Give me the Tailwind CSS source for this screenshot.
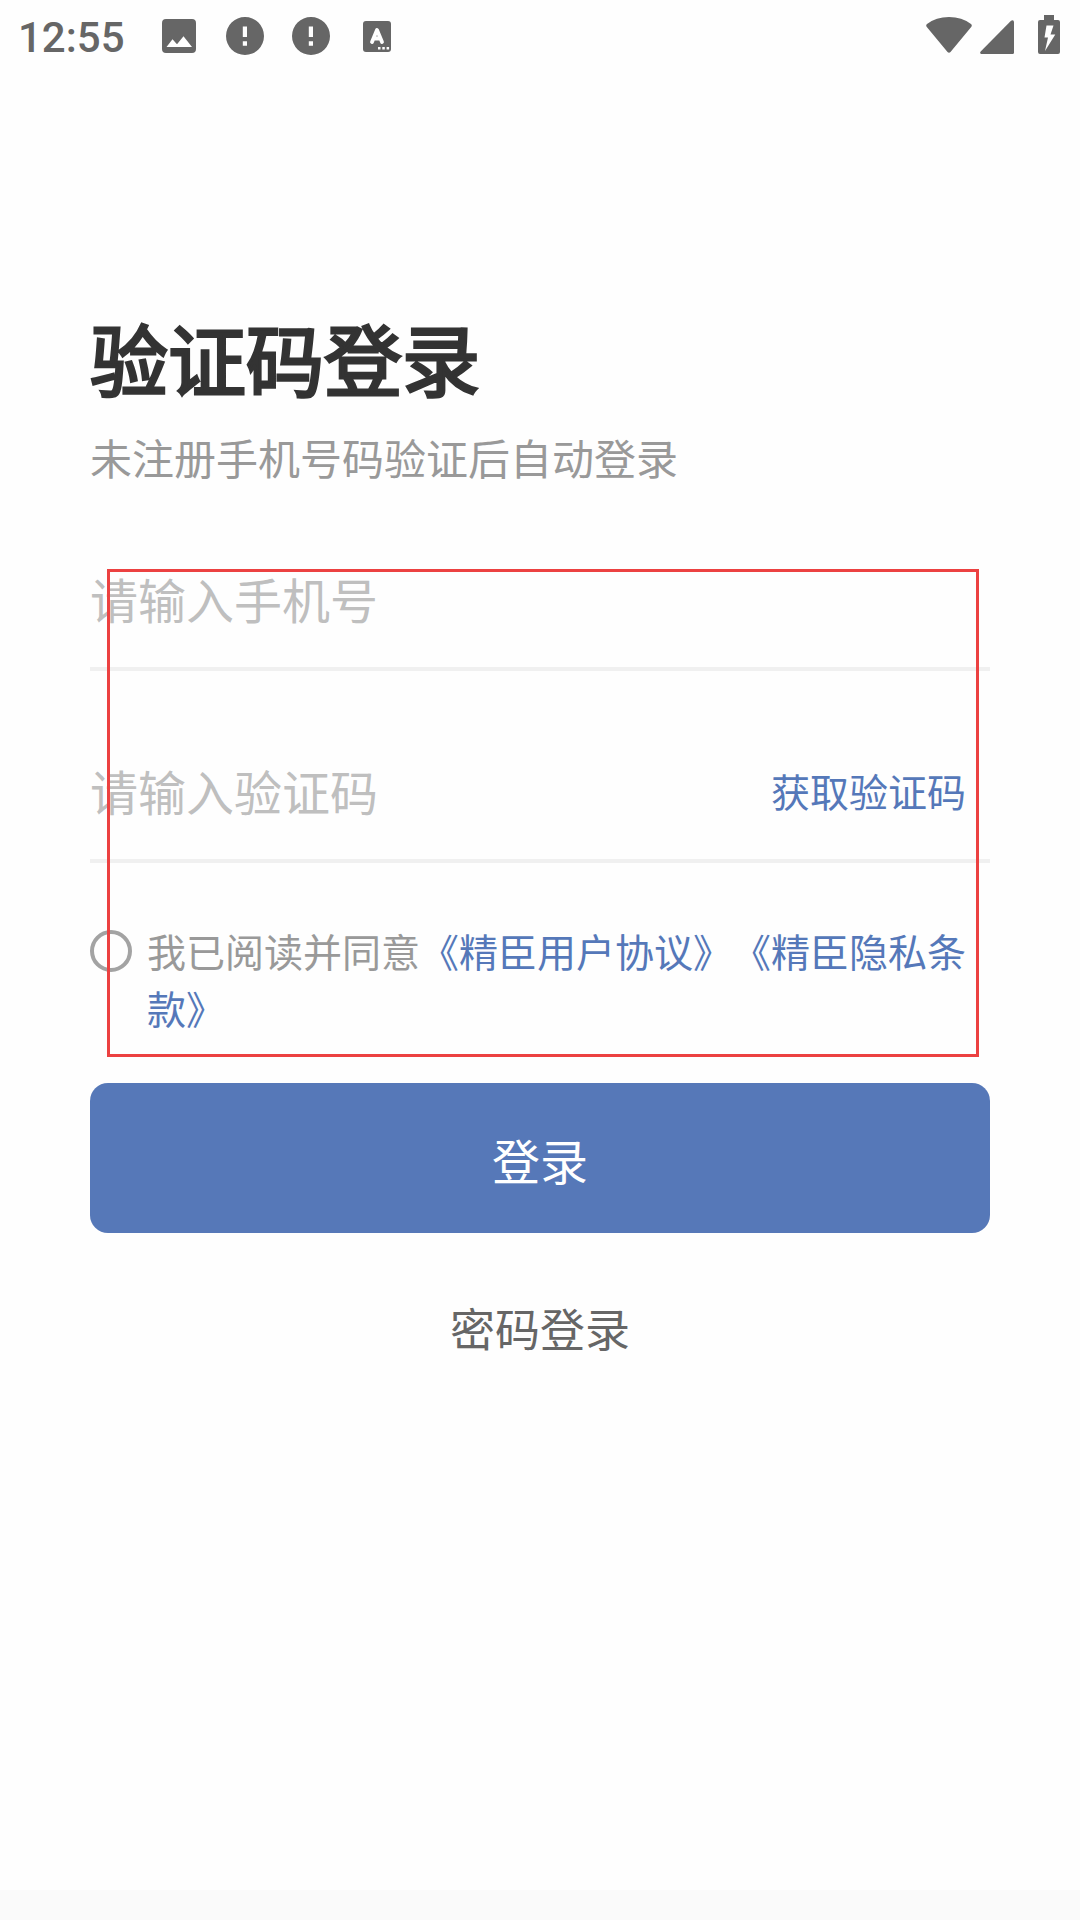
<!DOCTYPE html>
<html lang="zh-CN">
<head>
  <meta charset="UTF-8">
  <meta name="viewport" content="width=device-width, initial-scale=1.0">
  <title>验证码登录</title>
  <script src="https://cdn.jsdelivr.net/npm/@tailwindcss/browser@4"></script>
</head>
<body class="bg-[#fefefe] font-['Noto_Sans_CJK_SC',sans-serif]">
  <div class="relative flex flex-col w-[1080px] h-[1920px] overflow-hidden">
    <!-- Status bar -->
    <header class="flex items-center justify-between h-[72px] pl-[18px] pr-[20px] text-[#666]">
      <div class="flex items-center">
        <span class="w-[144px] h-[72px] pt-[2px] font-['Roboto',sans-serif] text-[42px] leading-[72px] font-medium">12:55</span>
        <svg class="w-[34px] h-[34px] mr-[30px]" viewBox="0 0 34 34" fill="currentColor">
          <path fill-rule="evenodd" d="M4 0h26a4 4 0 0 1 4 4v26a4 4 0 0 1-4 4H4a4 4 0 0 1-4-4V4a4 4 0 0 1 4-4zM4.500 28h25.500L21.500 17.200 15 25.200 10.500 20.200z"/>
        </svg>
        <svg class="w-[38px] h-[38px] mr-[28px]" viewBox="0 0 38 38" fill="currentColor">
          <path fill-rule="evenodd" d="M19 0a19 19 0 1 1 0 38 19 19 0 0 1 0-38zM16.800 9.500v10.500h4.200V9.500zM16.800 24.300v4.400h4.200v-4.400z"/>
        </svg>
        <svg class="w-[38px] h-[38px] mr-[33px]" viewBox="0 0 38 38" fill="currentColor">
          <path fill-rule="evenodd" d="M19 0a19 19 0 1 1 0 38 19 19 0 0 1 0-38zM16.800 9.500v10.500h4.200V9.500zM16.800 24.300v4.400h4.200v-4.400z"/>
        </svg>
        <svg class="w-[28px] h-[31px]" viewBox="0 0 28 31">
          <rect width="28" height="31" rx="3" fill="currentColor"/>
          <path d="M9 21l5-12 5 12M10.500 17.500h7" fill="none" stroke="#fefefe" stroke-width="3.800" stroke-linecap="round" stroke-linejoin="round"/>
          <path d="M15 26h2.500v2.500H15zM19.300 26h2.500v2.500h-2.500zM23.600 26h2.500v2.500h-2.500z" fill="#fefefe"/>
        </svg>
      </div>
      <div class="flex items-end h-[39px] mb-[3px]">
        <svg class="w-[46px] h-[36px] mr-[8px] mb-[1px]" viewBox="0 0 46 36" fill="currentColor">
          <path d="M1 7Q10 0 23 0T45 7Q46.500 8.500 45.200 10L24.500 35Q23 36.500 21.500 35L.800 10Q-.500 8.500 1 7z"/>
        </svg>
        <svg class="w-[34px] h-[34px] mr-[24px]" viewBox="0 0 34 34" fill="currentColor">
          <path d="M34 1.500V32.500Q34 34 32.500 34H1.200Q-.700 33.300.700 31.500L31 .800Q33-.700 34 1.500z"/>
        </svg>
        <svg class="w-[22px] h-[39px]" viewBox="0 0 22 39" fill="currentColor">
          <path fill-rule="evenodd" d="M6 0h10v5h4a2 2 0 0 1 2 2v30a2 2 0 0 1-2 2H2a2 2 0 0 1-2-2V7a2 2 0 0 1 2-2h4zM8.500 10.500L6.500 22.500H10L7 36 17.300 19.500H12.500L15.500 10.500z"/>
        </svg>
      </div>
    </header>

    <!-- Login form -->
    <main class="flex flex-col flex-1 px-[90px] pt-[225px]">
      <h1 class="h-[120px] text-[78px] leading-[120px] font-normal text-[#333] [-webkit-text-stroke:3px_#333]">验证码登录</h1>
      <p class="mt-[9px] text-[42px] leading-[62px] text-[#999]">未注册手机号码验证后自动登录</p>

      <div class="mt-[46px] h-[137px] pt-[29px] border-b-4 border-[#f0f0f0] text-[48px] leading-[70px] text-[#bfbfbf]">请输入手机号</div>
      <div class="flex justify-between h-[192px] pt-[84px] pr-[24px] border-b-4 border-[#f0f0f0] text-[48px] leading-[70px] text-[#bfbfbf]">
        <span>请输入验证码</span>
        <span class="text-[39px] text-[#5578b9]">获取验证码</span>
      </div>

      <div class="flex mt-[59px]">
        <span class="shrink-0 w-[42px] h-[42px] mt-[8px] rounded-full border-4 border-[#a3a3a3]"></span>
        <p class="ml-[15px] text-[39px] leading-[57px] whitespace-nowrap text-[#999] [text-spacing-trim:space-all]">我已阅读并同意<span class="text-[#5578b9]">《精臣用户协议》《精臣隐私条<br>款》</span></p>
      </div>

      <button class="mt-[47px] h-[150px] rounded-[18px] bg-[#5678b8] text-[48px] leading-[152px] text-white">登录</button>
      <a class="mt-[62px] text-center text-[45px] leading-[66px] text-[#666]">密码登录</a>
    </main>

    <footer class="h-[30px] bg-[#fafafa]"></footer>

    <!-- Highlight frame over the form fields -->
    <div class="absolute left-[107px] top-[569px] w-[872px] h-[488px] border-3 border-[#ec4141]"></div>
  </div>
</body>
</html>
